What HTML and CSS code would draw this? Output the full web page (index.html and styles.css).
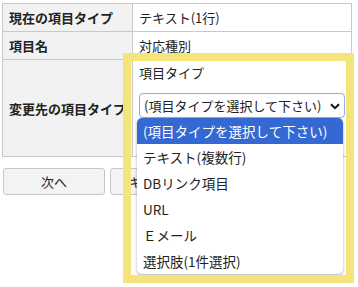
FILE: index.html
```html
<!doctype html>
<html>
  <head>
    <meta charset="utf-8">
    <title>項目タイプの変更</title>
    <link rel="stylesheet" href="styles.css">
  </head>
<body>
<div class="contents">
  <table class="form_table">
    <tr class="row_short">
      <th>現在の項目タイプ</th>
      <td>テキスト(1行)</td>
    </tr>
    <tr class="row_short">
      <th>項目名</th>
      <td>対応種別</td>
    </tr>
    <tr class="row_tall">
      <th>変更先の項目タイプ</th>
      <td class="cell_select">
        <div class="select_label">項目タイプ</div>
        <div class="select_box">
          <span>(項目タイプを選択して下さい)</span>
          <svg class="chevron" width="10" height="7" viewBox="0 0 10 7"><path d="M1 1.2 L5 5.2 L9 1.2" fill="none" stroke="#111" stroke-width="2"/></svg>
        </div>
      </td>
    </tr>
  </table>

  <div class="buttons">
    <button class="btn">次へ</button>
    <button class="btn">キャンセル</button>
  </div>
</div>

<!-- opened select list -->
<ul class="select_list">
  <li class="selected">(項目タイプを選択して下さい)</li>
  <li>テキスト(複数行)</li>
  <li>DBリンク項目</li>
  <li>URL</li>
  <li>Ｅメール</li>
  <li>選択肢(1件選択)</li>
</ul>

<!-- highlight frame -->
<div class="highlight"></div>
</body>
</html>
```

FILE: styles.css
```css
html, body {
  margin: 0px;
  background: #ffffff;
  font-family: "Noto Sans CJK JP", "Noto Sans", sans-serif;
  font-size: 13px;
  color: #222222;
}

.contents {
  padding: 3px 0 0 2px;
}

.form_table {
  border-collapse: collapse;
  width: 347px;
}

.form_table th,
.form_table td {
  border: 1px solid #c9c9c9;
  padding: 0 6px;
  text-align: left;
  white-space: nowrap;
}

.form_table th {
  width: 115px;
  background: #f2f2f2;
  font-weight: bold;
  overflow: hidden;
}

.row_short { height: 28px; }
.row_tall { height: 97px; }

.cell_select {
  vertical-align: top;
}

.select_label {
  margin-top: 3px;
  line-height: 20px;
}

.select_box {
  margin-top: 10px;
  height: 25px;
  width: 206px;
  box-sizing: border-box;
  border: 1px solid #8eb0e0;
  border-radius: 4px;
  display: flex;
  align-items: center;
  justify-content: space-between;
  padding: 0 4px 0 4px;
}

.chevron { margin-top: 1px; }

.select_list {
  position: absolute;
  left: 137px;
  top: 118px;
  width: 206px;
  margin: 0;
  padding: 0;
  list-style: none;
  background: #ffffff;
  border-radius: 5px;
  box-shadow: 0 1px 3px rgba(0,0,0,0.35);
  z-index: 2;
}

.select_list li {
  height: 26px;
  line-height: 26px;
  padding: 0 6px;
  font-size: 13.5px;
}

.select_list li.selected {
  background: #3468d2;
  color: #ffffff;
  border-radius: 5px 5px 0 0;
}

.buttons {
  display: flex;
  gap: 5px;
  margin-top: 11px;
  padding-left: 1px;
}

.btn {
  width: 102px;
  height: 27px;
  font-family: inherit;
  font-size: 13px;
  color: #222222;
  background: #f3f3f3;
  border: 1px solid #c6c6c6;
  border-radius: 3px;
}

.highlight {
  position: absolute;
  left: 123px;
  top: 53px;
  width: 231px;
  height: 230px;
  box-sizing: border-box;
  border: 8px solid #f4e47b;
  z-index: 3;
}
```
